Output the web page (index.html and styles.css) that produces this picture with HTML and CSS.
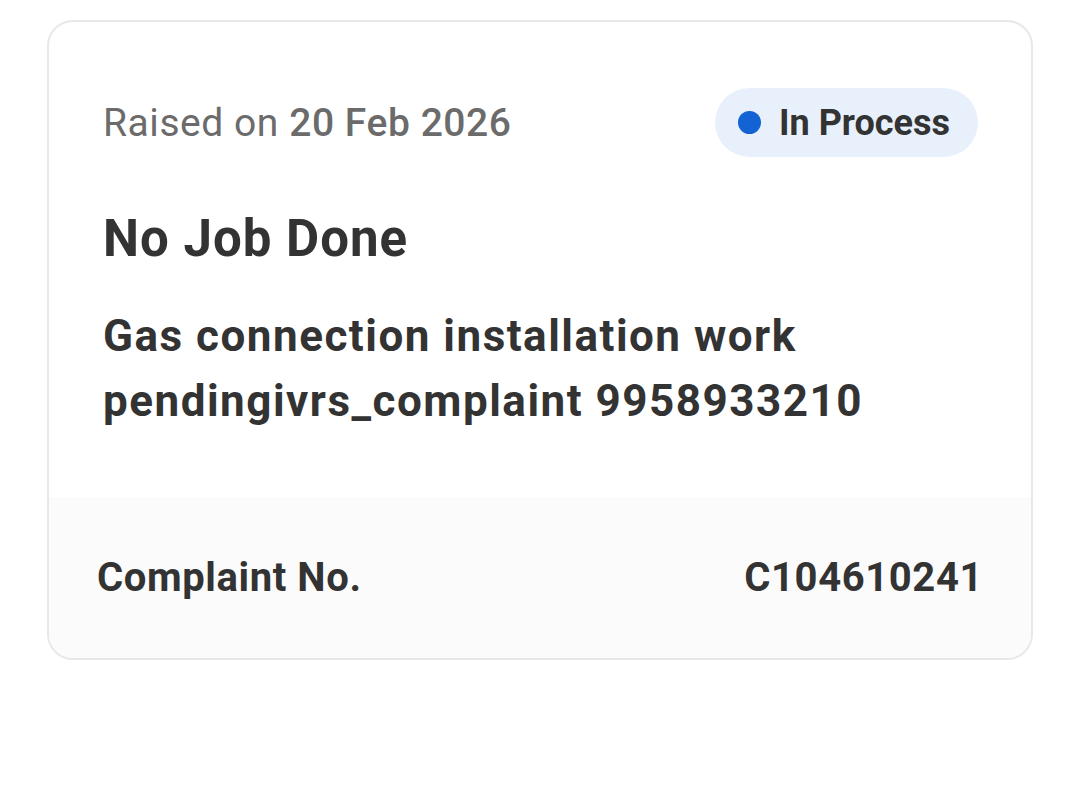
FILE: index.html
```html
<!DOCTYPE html>
<html>
<head>
<meta charset="utf-8">
<link rel="stylesheet" href="styles.css">
</head>
<body>
<div class="page">
  <div class="card">
    <div class="card-body">
      <div class="top-row">
        <div class="raised">Raised on <span class="date">20 Feb 2026</span></div>
        <div class="badge"><span class="dot"></span><span class="badge-text">In Process</span></div>
      </div>
      <div class="title">No Job Done</div>
      <div class="desc">Gas connection installation work pendingivrs_complaint 9958933210</div>
    </div>
    <div class="card-footer">
      <span class="label">Complaint No.</span>
      <span class="value">C104610241</span>
    </div>
  </div>
</div>
</body>
</html>
```
FILE: styles.css
```css
* { box-sizing: border-box; }
html, body { margin: 0; padding: 0; background: #fff; }
body { font-family: Roboto, "Noto Sans", "Liberation Sans", sans-serif; color: #333; }
.page { padding: 20px 47px 0 47px; width: 1080px; }
.card {
  border: 2px solid #e8e8e8;
  border-radius: 26px;
  overflow: hidden;
  background: #fff;
}
.card-body { padding: 66px 53px 63px 54px; }
.top-row { display: flex; justify-content: space-between; align-items: center; }
.raised { font-size: 39px; color: #6b6b6b; letter-spacing: 0.55px; }
.date { font-weight: 500; }
.badge {
  display: flex; align-items: center;
  height: 69px; padding: 0 28px 0 23px;
  background: #e8f0fb; border-radius: 35px;
}
.dot { width: 23px; height: 23px; border-radius: 50%; background: #1463d4; margin-right: 18px; }
.badge-text { font-size: 36px; font-weight: 700; color: #333; }
.title { font-size: 51px; font-weight: 700; margin-top: 52px; color: #333; letter-spacing: 1px; }
.desc { font-size: 44px; font-weight: 700; line-height: 65px; margin-top: 36px; color: #333; width: 860px; letter-spacing: 1.5px; }
.card-footer {
  background: #fbfbfb;
  display: flex; justify-content: space-between; align-items: center;
  height: 161px; padding: 0 48px;
  font-size: 40px; font-weight: 700; color: #333; letter-spacing: 0.6px;
}
```
